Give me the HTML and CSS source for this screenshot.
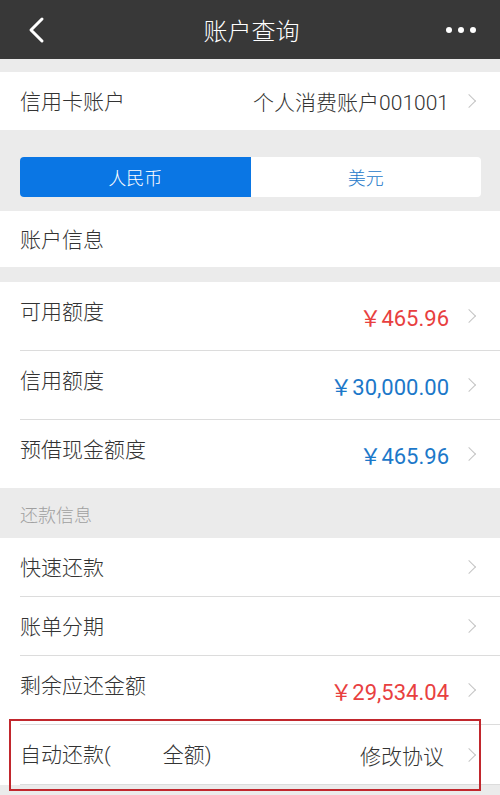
FILE: index.html
```html
<!DOCTYPE html>
<html lang="zh-CN">
<head>
  <meta charset="UTF-8" />
  <meta name="viewport" content="width=device-width, initial-scale=1.0" />
  <title>账户查询</title>
  <link rel="stylesheet" href="styles.css">
</head>
<body>
  <header class="nav-bar">
    <svg class="nav-back" width="20" height="28" viewBox="0 0 20 28">
      <polyline points="15,3 4,14 15,25" fill="none" stroke="#fff" stroke-width="3" stroke-linecap="round" stroke-linejoin="round" />
    </svg>
    <h1 class="nav-title">账户查询</h1>
    <span class="nav-more"><i></i><i></i><i></i></span>
  </header>

  <div class="group first">
    <div class="row">
      <span class="label">信用卡账户</span>
      <span class="value">个人消费账户001001</span>
      <span class="chevron"></span>
    </div>
  </div>

  <div class="segment-wrap">
    <div class="segment">
      <div class="seg-item active">人民币</div>
      <div class="seg-item">美元</div>
    </div>
  </div>

  <div class="group">
    <div class="row plain">
      <span class="label">账户信息</span>
    </div>
  </div>

  <div class="group spaced">
    <div class="row tall">
      <span class="label raised">可用额度</span>
      <span class="value red">￥465.96</span>
      <span class="chevron"></span>
    </div>
    <div class="row tall">
      <span class="label raised">信用额度</span>
      <span class="value blue">￥30,000.00</span>
      <span class="chevron"></span>
    </div>
    <div class="row tall last">
      <span class="label raised">预借现金额度</span>
      <span class="value blue">￥465.96</span>
      <span class="chevron"></span>
    </div>
  </div>

  <div class="section-title">还款信息</div>

  <div class="group">
    <div class="row">
      <span class="label">快速还款</span>
      <span class="chevron"></span>
    </div>
    <div class="row">
      <span class="label">账单分期</span>
      <span class="chevron"></span>
    </div>
    <div class="row tall">
      <span class="label raised">剩余应还金额</span>
      <span class="value red">￥29,534.04</span>
      <span class="chevron"></span>
    </div>
    <div class="row auto">
      <span class="label">自动还款(<span class="blank"></span>全额)</span>
      <span class="value">修改协议</span>
      <span class="chevron"></span>
      <span class="highlight"></span>
    </div>
  </div>
</body>
</html>
```

FILE: styles.css
```css
body {
  margin: 0;
  background: #ebebeb;
  font-family: Roboto, "Noto Sans CJK SC", sans-serif;
  font-weight: 300;
  color: #333;
}

.nav-bar {
  height: 59px;
  background: #383838;
  display: grid;
  grid-template-columns: 1fr auto 1fr;
  align-items: center;
  padding: 0 24px 0 27px;
}

.nav-title {
  margin: 0;
  font-size: 24px;
  font-weight: 300;
  color: #fff;
}

.nav-more {
  display: flex;
  justify-content: flex-end;
  gap: 6px;
}

.nav-more i {
  width: 6px;
  height: 6px;
  border-radius: 50%;
  background: #fff;
}

.group {
  background: #fff;
}

.group.first {
  margin-top: 13px;
}

.group.spaced {
  margin-top: 15px;
}

.row {
  position: relative;
  height: 58px;
  margin-left: 20px;
  padding-right: 23px;
  display: flex;
  align-items: center;
  border-bottom: 1px solid #dcdcdc;
  font-size: 21px;
}

.group.first .row,
.row.plain,
.row.last {
  border-bottom: none;
}

.row.plain {
  height: 56px;
}

.row.tall {
  height: 68px;
}

.label {
  flex: 1;
  color: #333;
  padding-bottom: 3px;
}

.label.raised {
  padding-bottom: 13px;
}

.value {
  color: #333;
  margin-right: 15px;
}

.value.red,
.value.blue {
  font-size: 22px;
  font-weight: normal;
}

.value.red {
  color: #e8403f;
}

.value.blue {
  color: #1c78c9;
}

.chevron {
  width: 9px;
  height: 9px;
  border-top: 1.5px solid #c4c4c4;
  border-right: 1.5px solid #c4c4c4;
  transform: rotate(45deg);
  margin-right: 3px;
}

.segment-wrap {
  padding: 27px 19px 14px 20px;
}

.segment {
  display: flex;
  height: 40px;
  background: #fff;
  border-radius: 4px;
  overflow: hidden;
}

.seg-item {
  flex: 1;
  display: flex;
  align-items: center;
  justify-content: center;
  font-size: 18px;
  color: #1c78c9;
}

.seg-item.active {
  background: #0a76e4;
  color: #fff;
}

.section-title {
  height: 50px;
  display: flex;
  align-items: center;
  padding-left: 20px;
  padding-top: 2px;
  box-sizing: border-box;
  font-size: 18px;
  color: #a0a0a0;
}

.row.auto {
  height: 59px;
  margin-bottom: 13px;
}

.row.auto .value {
  margin-right: 20px;
}

.blank {
  display: inline-block;
  width: 52px;
}

.highlight {
  position: absolute;
  left: -11px;
  right: 19px;
  top: -6px;
  bottom: -7px;
  border: 2px solid #c1272d;
}
```
